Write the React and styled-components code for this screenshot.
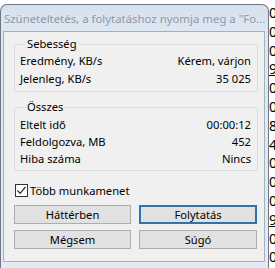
import React from 'react';
import styled, { createGlobalStyle } from 'styled-components';

const GlobalStyle = createGlobalStyle`
  html, body {
    margin: 0;
    padding: 0;
    background: #ffffff;
  }
  body {
    font-family: "Noto Sans", "Open Sans", sans-serif;
    font-size: 11.2px;
    color: #000;
  }
`;

const Screen = styled.div`
  display: flex;
  width: 275px;
  height: 268px;
  overflow: hidden;
  background: #ffffff;
`;

const Window = styled.div`
  width: 269px;
  height: 264px;
  margin-top: 4px;
  box-sizing: border-box;
  border: 1px solid #6d7785;
  border-bottom: none;
  border-radius: 7px 7px 0 0;
  background: linear-gradient(#d6e1ee, #dfe8f2 30px, #e3eaf2);
  display: flex;
  flex-direction: column;
  padding: 0 3px 6px 2px;
  flex-shrink: 0;
`;

const TitleBar = styled.div`
  height: 26px;
  display: flex;
  align-items: center;
  font-size: 11.4px;
  color: #8d99a9;
  white-space: nowrap;
  overflow: hidden;
  padding-left: 1px;
`;

const Client = styled.div`
  flex: 1;
  background: #f0f0f0;
  border: 1px solid #a6b1be;
  display: flex;
  flex-direction: column;
  padding: 4px 6px 0 10px;
`;

const Group = styled.fieldset`
  margin: 0 0 ${({ $gap }) => $gap}px 0;
  padding: ${({ $top }) => $top}px 6px 3px 5px;
  border: 1px solid #dcdcdc;
  border-radius: 3px;
  min-width: 0;
`;

const Legend = styled.legend`
  padding: 0 2px;
  margin-left: 5px;
  line-height: 16px;
`;

const Row = styled.div`
  display: flex;
  justify-content: space-between;
  height: ${({ $h }) => $h}px;
  line-height: ${({ $h }) => $h}px;
`;

const CheckRow = styled.label`
  display: flex;
  align-items: center;
  gap: 2px;
  margin: 12px 0 0 1px;
  height: 14px;
`;

const Box = styled.span`
  width: 13px;
  height: 13px;
  box-sizing: border-box;
  border: 1px solid #333;
  background: #fff;
  display: flex;
  align-items: center;
  justify-content: center;
`;

const Buttons = styled.div`
  display: grid;
  grid-template-columns: 117px 118px;
  column-gap: 8px;
  row-gap: 6px;
  margin-top: 8px;
`;

const Button = styled.button`
  height: 19px;
  box-sizing: border-box;
  padding: 0;
  font: inherit;
  color: #000;
  background: #e1e1e1;
  border: ${({ $default }) => ($default ? '2px solid #2f73ad' : '1px solid #adadad')};
`;

const Behind = styled.div`
  flex: 1;
  display: flex;
  flex-direction: column;
  padding-top: 4px;
  overflow: hidden;
  font-family: "Noto Sans", sans-serif;
  font-size: 14px;
  line-height: 18.8px;
`;

const Digit = styled.span`
  text-decoration: ${({ $link }) => ($link ? 'underline' : 'none')};
  white-space: nowrap;
`;

const digits = ['0', '0', '0', '9', '0', '0', '8', '4', '0', '0', '0', '9', '0', '0'];

export default function App() {
  return (
    <>
      <GlobalStyle />
      <Screen>
        <Window>
          <TitleBar>Szüneteltetés, a folytatáshoz nyomja meg a "Fo...</TitleBar>
          <Client>
            <Group $top={0} $gap={7}>
              <Legend>Sebesség</Legend>
              <Row $h={18}>
                <span>Eredmény, KB/s</span>
                <span>Kérem, várjon</span>
              </Row>
              <Row $h={18}>
                <span>Jelenleg, KB/s</span>
                <span>35 025</span>
              </Row>
            </Group>
            <Group $top={1} $gap={0}>
              <Legend>Összes</Legend>
              <Row $h={17}>
                <span>Eltelt idő</span>
                <span>00:00:12</span>
              </Row>
              <Row $h={17}>
                <span>Feldolgozva, MB</span>
                <span>452</span>
              </Row>
              <Row $h={17}>
                <span>Hiba száma</span>
                <span>Nincs</span>
              </Row>
            </Group>
            <CheckRow>
              <Box>
                <svg width="11" height="11" viewBox="0 0 11 11">
                  <path d="M1.5 5.5 L4.2 8.3 L9.5 1.8" fill="none" stroke="#222" strokeWidth="1.2" />
                </svg>
              </Box>
              <span>Több munkamenet</span>
            </CheckRow>
            <Buttons>
              <Button>Háttérben</Button>
              <Button $default>Folytatás</Button>
              <Button>Mégsem</Button>
              <Button>Súgó</Button>
            </Buttons>
          </Client>
        </Window>
        <Behind>
          {digits.map((d, i) => (
            <Digit key={i} $link={d === '9'}>{d}</Digit>
          ))}
        </Behind>
      </Screen>
    </>
  );
}
